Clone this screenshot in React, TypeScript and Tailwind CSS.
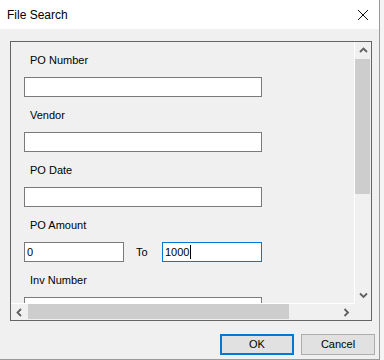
const font = { fontFamily: '"Liberation Sans", Arial, sans-serif' }

const Chevron = ({ dir }: { dir: 'up' | 'down' | 'left' | 'right' }) => {
  const pts: Record<string, string> = {
    up: '1,5 4.5,1.5 8,5',
    down: '1,1.5 4.5,5 8,1.5',
    left: '5,1 1.5,4.5 5,8',
    right: '1.5,1 5,4.5 1.5,8',
  }
  const vertical = dir === 'up' || dir === 'down'
  return (
    <svg width={vertical ? 9 : 7} height={vertical ? 7 : 9} viewBox={vertical ? '0 0 9 7' : '0 0 7 9'}>
      <polyline points={pts[dir]} fill="none" stroke="#606060" strokeWidth="1.8" />
    </svg>
  )
}

const Field = ({ label, focused }: { label: string; focused?: boolean }) => (
  <div className="pt-[11px]">
    <div className="ml-[19px] h-[14px] text-[11px] leading-[14px] text-black">{label}</div>
    <div
      className={`mt-[10px] ml-[13px] h-[20px] w-[238px] border bg-white ${focused ? 'border-[#0078d7]' : 'border-[#7a7a7a]'}`}
    />
  </div>
)

export default function App() {
  return (
    <div className="h-[360px] w-[384px] bg-[#f4f4f4]" style={font}>
      <div className="flex h-[360px] w-[380px] flex-col border-r border-b border-[#9a9a9a] bg-[#f0f0f0]">
        {/* title bar */}
        <div className="flex h-[29px] items-center justify-between bg-white pl-[7px] pr-[10px]">
          <span className="text-[12px] text-black">File Search</span>
          <svg width="12" height="12" viewBox="0 0 12 12">
            <path d="M1 1 L11 11 M11 1 L1 11" stroke="#111" strokeWidth="1" />
          </svg>
        </div>

        {/* scroll panel */}
        <div className="mt-[12px] ml-[10px] grid h-[280px] w-[362px] grid-cols-[344px_16px] grid-rows-[262px_16px] border border-[#646464]">
          <div className="overflow-hidden border-r border-b border-white">
            <Field label="PO Number" />
            <Field label="Vendor" />
            <Field label="PO Date" />
            <div className="pt-[11px]">
              <div className="ml-[19px] h-[14px] text-[11px] leading-[14px] text-black">PO Amount</div>
              <div className="mt-[10px] ml-[13px] flex items-center">
                <div className="flex h-[20px] w-[100px] items-center border border-[#7a7a7a] bg-white pl-[2px] text-[11px] text-black">
                  0
                </div>
                <span className="ml-[12px] w-[26px] text-[11px] text-black">To</span>
                <div className="flex h-[20px] w-[100px] items-center border border-[#0078d7] bg-white pl-[2px] text-[11px] text-black">
                  1000
                  <span className="ml-px h-[14px] w-px bg-black" />
                </div>
              </div>
            </div>
            <Field label="Inv Number" />
          </div>

          {/* vertical scrollbar */}
          <div className="flex flex-col">
            <div className="flex h-[17px] items-center justify-center">
              <Chevron dir="up" />
            </div>
            <div className="h-[135px] w-[15px] bg-[#cdcdcd]" />
            <div className="flex-1" />
            <div className="flex h-[17px] items-center justify-center">
              <Chevron dir="down" />
            </div>
          </div>

          {/* horizontal scrollbar */}
          <div className="flex">
            <div className="flex w-[17px] items-center justify-center">
              <Chevron dir="left" />
            </div>
            <div className="h-[15px] w-[261px] bg-[#cdcdcd]" />
            <div className="flex-1" />
            <div className="flex w-[17px] items-center justify-center">
              <Chevron dir="right" />
            </div>
          </div>
          <div />
        </div>

        {/* buttons */}
        <div className="mt-[13px] flex justify-end gap-[7px] pr-[4px]">
          <button className="h-[21px] w-[74px] border-2 border-[#0078d7] bg-[#e1e1e1] text-[11px] text-black">OK</button>
          <button className="h-[21px] w-[74px] border border-[#adadad] bg-[#e1e1e1] text-[11px] text-black">Cancel</button>
        </div>
      </div>
    </div>
  )
}
